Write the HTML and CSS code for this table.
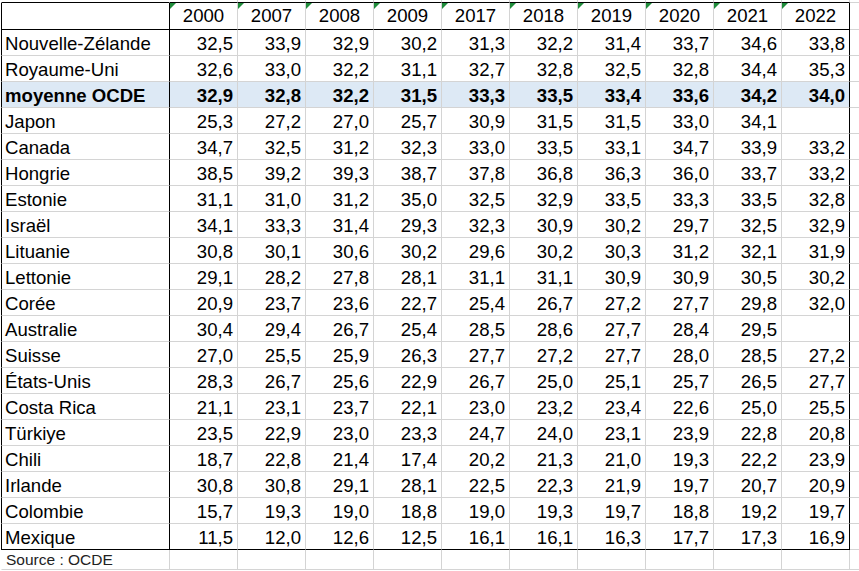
FILE: index.html
```html
<!DOCTYPE html>
<html lang="fr">
<head>
<meta charset="utf-8">
<title>Tableau OCDE</title>
<link rel="stylesheet" href="styles.css">
</head>
<body>
<table class="sheet">
  <tr class="stub">
    <td class="name"></td>
    <td class="yr"></td><td class="yr"></td><td class="yr"></td><td class="yr"></td><td class="yr"></td>
    <td class="yr"></td><td class="yr"></td><td class="yr"></td><td class="yr"></td><td class="yr"></td>
    <td class="extra"></td>
  </tr>
  <tr class="head">
    <th class="name"></th>
    <th class="yr"><span class="flag"></span>2000</th>
    <th class="yr"><span class="flag"></span>2007</th>
    <th class="yr"><span class="flag"></span>2008</th>
    <th class="yr"><span class="flag"></span>2009</th>
    <th class="yr"><span class="flag"></span>2017</th>
    <th class="yr"><span class="flag"></span>2018</th>
    <th class="yr"><span class="flag"></span>2019</th>
    <th class="yr"><span class="flag"></span>2020</th>
    <th class="yr"><span class="flag"></span>2021</th>
    <th class="yr"><span class="flag"></span>2022</th>
    <td class="extra"></td>
  </tr>
  <tr class="row"><td class="name">Nouvelle-Zélande</td><td class="yr">32,5</td><td class="yr">33,9</td><td class="yr">32,9</td><td class="yr">30,2</td><td class="yr">31,3</td><td class="yr">32,2</td><td class="yr">31,4</td><td class="yr">33,7</td><td class="yr">34,6</td><td class="yr">33,8</td><td class="extra"></td></tr>
  <tr class="row"><td class="name">Royaume-Uni</td><td class="yr">32,6</td><td class="yr">33,0</td><td class="yr">32,2</td><td class="yr">31,1</td><td class="yr">32,7</td><td class="yr">32,8</td><td class="yr">32,5</td><td class="yr">32,8</td><td class="yr">34,4</td><td class="yr">35,3</td><td class="extra"></td></tr>
  <tr class="row avg"><td class="name">moyenne OCDE</td><td class="yr">32,9</td><td class="yr">32,8</td><td class="yr">32,2</td><td class="yr">31,5</td><td class="yr">33,3</td><td class="yr">33,5</td><td class="yr">33,4</td><td class="yr">33,6</td><td class="yr">34,2</td><td class="yr">34,0</td><td class="extra"></td></tr>
  <tr class="row"><td class="name">Japon</td><td class="yr">25,3</td><td class="yr">27,2</td><td class="yr">27,0</td><td class="yr">25,7</td><td class="yr">30,9</td><td class="yr">31,5</td><td class="yr">31,5</td><td class="yr">33,0</td><td class="yr">34,1</td><td class="yr"></td><td class="extra"></td></tr>
  <tr class="row"><td class="name">Canada</td><td class="yr">34,7</td><td class="yr">32,5</td><td class="yr">31,2</td><td class="yr">32,3</td><td class="yr">33,0</td><td class="yr">33,5</td><td class="yr">33,1</td><td class="yr">34,7</td><td class="yr">33,9</td><td class="yr">33,2</td><td class="extra"></td></tr>
  <tr class="row"><td class="name">Hongrie</td><td class="yr">38,5</td><td class="yr">39,2</td><td class="yr">39,3</td><td class="yr">38,7</td><td class="yr">37,8</td><td class="yr">36,8</td><td class="yr">36,3</td><td class="yr">36,0</td><td class="yr">33,7</td><td class="yr">33,2</td><td class="extra"></td></tr>
  <tr class="row"><td class="name">Estonie</td><td class="yr">31,1</td><td class="yr">31,0</td><td class="yr">31,2</td><td class="yr">35,0</td><td class="yr">32,5</td><td class="yr">32,9</td><td class="yr">33,5</td><td class="yr">33,3</td><td class="yr">33,5</td><td class="yr">32,8</td><td class="extra"></td></tr>
  <tr class="row"><td class="name">Israël</td><td class="yr">34,1</td><td class="yr">33,3</td><td class="yr">31,4</td><td class="yr">29,3</td><td class="yr">32,3</td><td class="yr">30,9</td><td class="yr">30,2</td><td class="yr">29,7</td><td class="yr">32,5</td><td class="yr">32,9</td><td class="extra"></td></tr>
  <tr class="row"><td class="name">Lituanie</td><td class="yr">30,8</td><td class="yr">30,1</td><td class="yr">30,6</td><td class="yr">30,2</td><td class="yr">29,6</td><td class="yr">30,2</td><td class="yr">30,3</td><td class="yr">31,2</td><td class="yr">32,1</td><td class="yr">31,9</td><td class="extra"></td></tr>
  <tr class="row"><td class="name">Lettonie</td><td class="yr">29,1</td><td class="yr">28,2</td><td class="yr">27,8</td><td class="yr">28,1</td><td class="yr">31,1</td><td class="yr">31,1</td><td class="yr">30,9</td><td class="yr">30,9</td><td class="yr">30,5</td><td class="yr">30,2</td><td class="extra"></td></tr>
  <tr class="row"><td class="name">Corée</td><td class="yr">20,9</td><td class="yr">23,7</td><td class="yr">23,6</td><td class="yr">22,7</td><td class="yr">25,4</td><td class="yr">26,7</td><td class="yr">27,2</td><td class="yr">27,7</td><td class="yr">29,8</td><td class="yr">32,0</td><td class="extra"></td></tr>
  <tr class="row"><td class="name">Australie</td><td class="yr">30,4</td><td class="yr">29,4</td><td class="yr">26,7</td><td class="yr">25,4</td><td class="yr">28,5</td><td class="yr">28,6</td><td class="yr">27,7</td><td class="yr">28,4</td><td class="yr">29,5</td><td class="yr"></td><td class="extra"></td></tr>
  <tr class="row"><td class="name">Suisse</td><td class="yr">27,0</td><td class="yr">25,5</td><td class="yr">25,9</td><td class="yr">26,3</td><td class="yr">27,7</td><td class="yr">27,2</td><td class="yr">27,7</td><td class="yr">28,0</td><td class="yr">28,5</td><td class="yr">27,2</td><td class="extra"></td></tr>
  <tr class="row"><td class="name">États-Unis</td><td class="yr">28,3</td><td class="yr">26,7</td><td class="yr">25,6</td><td class="yr">22,9</td><td class="yr">26,7</td><td class="yr">25,0</td><td class="yr">25,1</td><td class="yr">25,7</td><td class="yr">26,5</td><td class="yr">27,7</td><td class="extra"></td></tr>
  <tr class="row"><td class="name">Costa Rica</td><td class="yr">21,1</td><td class="yr">23,1</td><td class="yr">23,7</td><td class="yr">22,1</td><td class="yr">23,0</td><td class="yr">23,2</td><td class="yr">23,4</td><td class="yr">22,6</td><td class="yr">25,0</td><td class="yr">25,5</td><td class="extra"></td></tr>
  <tr class="row"><td class="name">Türkiye</td><td class="yr">23,5</td><td class="yr">22,9</td><td class="yr">23,0</td><td class="yr">23,3</td><td class="yr">24,7</td><td class="yr">24,0</td><td class="yr">23,1</td><td class="yr">23,9</td><td class="yr">22,8</td><td class="yr">20,8</td><td class="extra"></td></tr>
  <tr class="row"><td class="name">Chili</td><td class="yr">18,7</td><td class="yr">22,8</td><td class="yr">21,4</td><td class="yr">17,4</td><td class="yr">20,2</td><td class="yr">21,3</td><td class="yr">21,0</td><td class="yr">19,3</td><td class="yr">22,2</td><td class="yr">23,9</td><td class="extra"></td></tr>
  <tr class="row"><td class="name">Irlande</td><td class="yr">30,8</td><td class="yr">30,8</td><td class="yr">29,1</td><td class="yr">28,1</td><td class="yr">22,5</td><td class="yr">22,3</td><td class="yr">21,9</td><td class="yr">19,7</td><td class="yr">20,7</td><td class="yr">20,9</td><td class="extra"></td></tr>
  <tr class="row"><td class="name">Colombie</td><td class="yr">15,7</td><td class="yr">19,3</td><td class="yr">19,0</td><td class="yr">18,8</td><td class="yr">19,0</td><td class="yr">19,3</td><td class="yr">19,7</td><td class="yr">18,8</td><td class="yr">19,2</td><td class="yr">19,7</td><td class="extra"></td></tr>
  <tr class="row last"><td class="name">Mexique</td><td class="yr">11,5</td><td class="yr">12,0</td><td class="yr">12,6</td><td class="yr">12,5</td><td class="yr">16,1</td><td class="yr">16,1</td><td class="yr">16,3</td><td class="yr">17,7</td><td class="yr">17,3</td><td class="yr">16,9</td><td class="extra"></td></tr>
  <tr class="source">
    <td class="name">Source : OCDE</td>
    <td class="yr"></td><td class="yr"></td><td class="yr"></td><td class="yr"></td><td class="yr"></td>
    <td class="yr"></td><td class="yr"></td><td class="yr"></td><td class="yr"></td><td class="yr"></td>
    <td class="extra"></td>
  </tr>
</table>
</body>
</html>
```

FILE: styles.css
```css
html, body {
  margin: 0;
  padding: 0;
  background: #ffffff;
  overflow: hidden;
}

body {
  font-family: "Liberation Sans", Arial, sans-serif;
  font-size: 18.6px;
  color: #000000;
}

.sheet {
  border-collapse: separate;
  border-spacing: 0;
  table-layout: fixed;
  width: 858px;
  margin-left: 1px;
}

.sheet td,
.sheet th {
  box-sizing: border-box;
  padding: 0;
  border-right: 1px solid #d4d4d4;
  border-bottom: 1px solid #d4d4d4;
  font-weight: normal;
  white-space: nowrap;
  overflow: hidden;
  vertical-align: bottom;
  line-height: 21px;
}

.sheet .name {
  width: 169px;
  text-align: left;
  padding-left: 3px;
}

.sheet .yr {
  width: 68px;
  text-align: right;
  padding-right: 4px;
}

.sheet .extra {
  width: 9px;
  border-right: none;
}

/* top spreadsheet row, mostly hidden above the table */
.stub td {
  height: 3px;
  line-height: 0;
  font-size: 0;
}

.stub .name,
.stub .yr {
  border-bottom-color: #000000;
}

/* header row */
.head th,
.head td {
  height: 27px;
  padding-bottom: 3px;
}

.head th {
  position: relative;
  border-bottom-color: #000000;
}

.head .yr {
  text-align: center;
  padding-right: 0;
}

.flag {
  position: absolute;
  left: 0;
  top: 0;
  width: 0;
  height: 0;
  border-top: 6px solid #1f8c3b;
  border-right: 6px solid transparent;
}

/* data rows */
.row td {
  height: 26px;
  padding-bottom: 1px;
}

.sheet .name {
  border-left: 1px solid #000000;
  border-right-color: #000000;
}

.stub .name {
  border-left-color: transparent;
  border-right-color: transparent;
}

.head .yr:nth-child(11),
.row .yr:nth-child(11) {
  border-right-color: #000000;
}

.last td.name,
.last td.yr {
  border-bottom-color: #000000;
}

.avg td.name,
.avg td.yr {
  background: #dde9f5;
  font-weight: bold;
}

/* source row */
.source td {
  height: 20px;
  font-size: 15.5px;
  line-height: 18px;
  color: #222222;
}

.source .name {
  border-left-color: transparent;
  border-right-color: #d4d4d4;
  padding-left: 4px;
}
```
